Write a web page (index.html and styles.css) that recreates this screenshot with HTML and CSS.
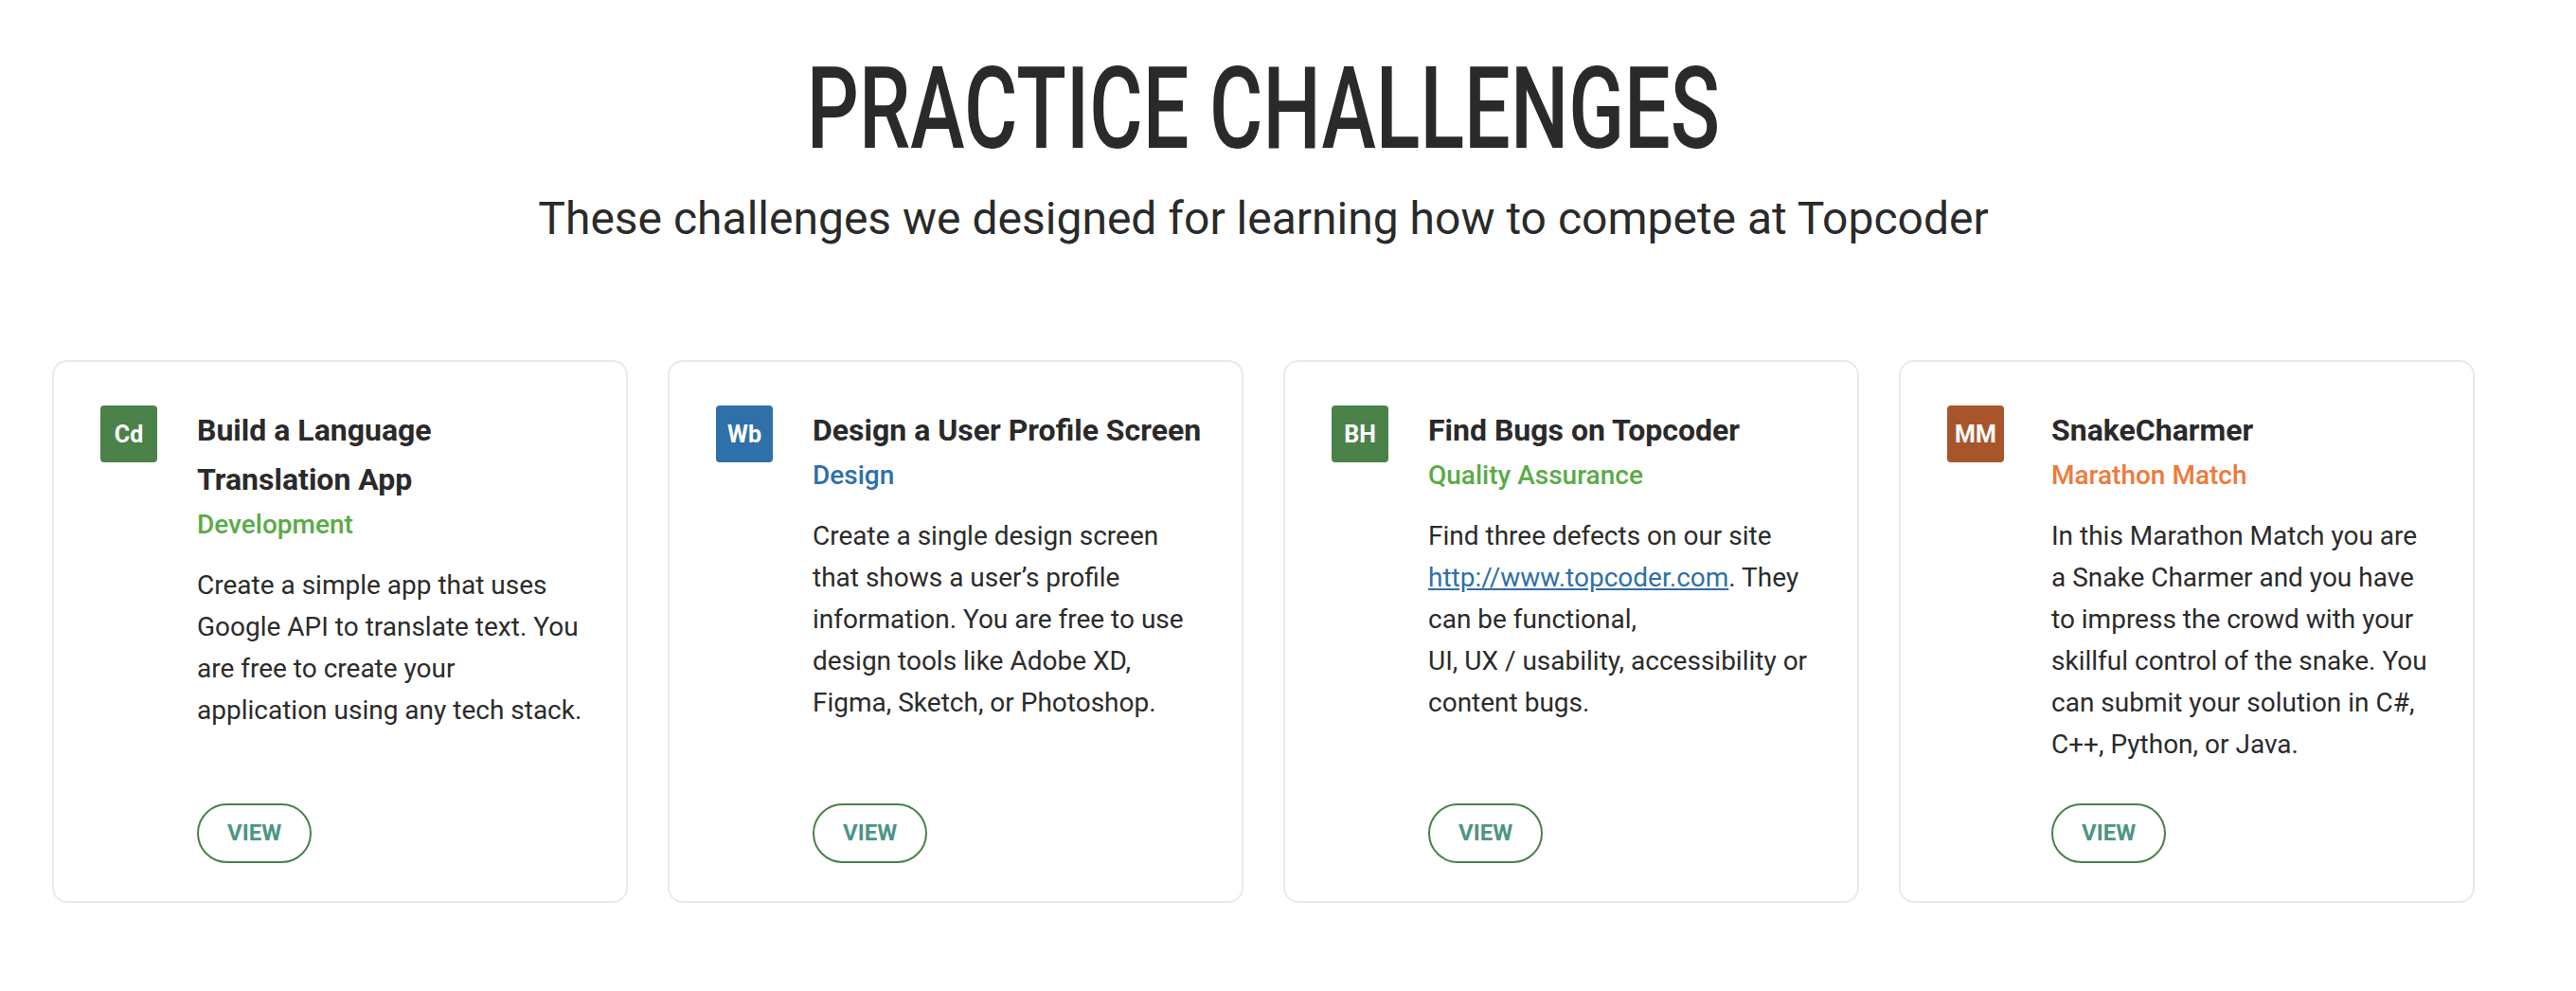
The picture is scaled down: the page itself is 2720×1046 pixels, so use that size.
FILE: index.html
```html
<!DOCTYPE html>
<html lang="en">
<head>
<meta charset="utf-8">
<title>Practice Challenges</title>
<link rel="stylesheet" href="styles.css">
</head>
<body>
<main class="page">
  <header class="intro">
    <h1 class="intro__title">PRACTICE CHALLENGES</h1>
    <p class="intro__subtitle">These challenges we designed for learning how to compete at Topcoder</p>
  </header>

  <section class="cards">
    <article class="card">
      <div class="badge badge--dev">Cd</div>
      <div class="card__body">
        <h2 class="card__title">Build a Language Translation App</h2>
        <div class="card__track track--dev">Development</div>
        <p class="card__desc">Create a simple app that uses Google API to translate text. You are free to create your application using any tech stack.</p>
        <a class="btn-view" href="#">VIEW</a>
      </div>
    </article>

    <article class="card">
      <div class="badge badge--design">Wb</div>
      <div class="card__body">
        <h2 class="card__title">Design a User Profile Screen</h2>
        <div class="card__track track--design">Design</div>
        <p class="card__desc">Create a single design screen that shows a user’s profile information. You are free to use design tools like Adobe XD, Figma, Sketch, or Photoshop.</p>
        <a class="btn-view" href="#">VIEW</a>
      </div>
    </article>

    <article class="card">
      <div class="badge badge--qa">BH</div>
      <div class="card__body">
        <h2 class="card__title">Find Bugs on Topcoder</h2>
        <div class="card__track track--qa">Quality Assurance</div>
        <p class="card__desc">Find three defects on our site <a class="card__link" href="#">http://www.topcoder.com</a>. They can be functional,<br>UI, UX / usability, accessibility or content bugs.</p>
        <a class="btn-view" href="#">VIEW</a>
      </div>
    </article>

    <article class="card card--wide-badge">
      <div class="badge badge--mm">MM</div>
      <div class="card__body">
        <h2 class="card__title">SnakeCharmer</h2>
        <div class="card__track track--mm">Marathon Match</div>
        <p class="card__desc">In this Marathon Match you are a Snake Charmer and you have to impress the crowd with your skillful control of the snake. You can submit your solution in C#, C++, Python, or Java.</p>
        <a class="btn-view" href="#">VIEW</a>
      </div>
    </article>
  </section>
</main>
</body>
</html>
```

FILE: styles.css
```css
* { box-sizing: border-box; }

html, body {
  margin: 0;
  padding: 0;
  background: #ffffff;
}

body {
  font-family: Roboto, "Noto Sans", "Liberation Sans", sans-serif;
  color: #2a2a2a;
}

.page {
  width: 2668px;
  padding-top: 55px;
}

.intro {
  text-align: center;
}

.intro__title {
  margin: 0;
  font-size: 120px;
  line-height: 120px;
  font-weight: 500;
  color: #2a2a2a;
  transform: scaleX(0.72);
  letter-spacing: 0;
}

.intro__subtitle {
  margin: 28px 0 0;
  font-size: 48px;
  line-height: 56px;
  font-weight: 400;
  color: #2a2a2a;
}

.cards {
  display: grid;
  grid-template-columns: repeat(4, 1fr);
  gap: 42px;
  padding: 0 55px;
  margin-top: 121px;
}

.card {
  display: flex;
  align-items: stretch;
  gap: 42px;
  border: 2px solid #e9e9e9;
  border-radius: 16px;
  padding: 46px 41px 40px 49px;
  background: #fff;
}

.card--wide-badge {
  gap: 50px;
  padding-right: 42px;
}

.badge {
  flex: 0 0 60px;
  width: 60px;
  height: 60px;
  border-radius: 4px;
  color: #ffffff;
  font-size: 25px;
  font-weight: 700;
  display: flex;
  align-items: center;
  justify-content: center;
}

.badge--dev,
.badge--qa { background: #4a8249; }
.badge--design { background: #3070a9; }
.badge--mm { background: #a9552b; }

.card__body {
  flex: 1;
  display: flex;
  flex-direction: column;
  align-items: flex-start;
}

.card__title {
  margin: 0;
  font-size: 32px;
  line-height: 52px;
  font-weight: 700;
  color: #2a2a2a;
}

.card__track {
  font-size: 28px;
  line-height: 44px;
  font-weight: 500;
}

.track--dev,
.track--qa { color: #5aab48; }
.track--design { color: #2f6fa9; }
.track--mm { color: #ee7a3b; }

.card__desc {
  margin: 20px 0 40px;
  font-size: 28px;
  line-height: 44px;
  font-weight: 400;
  color: #2b2b2b;
}

.card__link {
  color: #2f6fa9;
  text-decoration: underline;
}

.btn-view {
  margin-top: auto;
  display: inline-block;
  border: 2px solid #4a8249;
  border-radius: 32px;
  padding: 0 30px;
  line-height: 59px;
  font-size: 24px;
  font-weight: 700;
  color: #4e9584;
  text-decoration: none;
}
```
